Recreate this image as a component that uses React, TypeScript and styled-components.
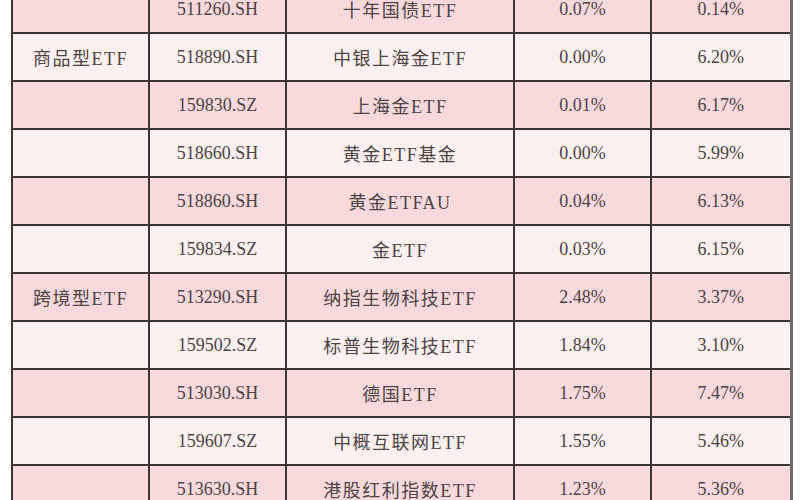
import styled, { createGlobalStyle } from 'styled-components';

const GlobalStyle = createGlobalStyle`
  html, body {
    margin: 0;
    padding: 0;
    background: #ffffff;
    overflow: hidden;
  }
`;

const Page = styled.div`
  width: 800px;
  height: 500px;
  overflow: hidden;
  padding-left: 11px;
  box-sizing: border-box;
`;

const Table = styled.table`
  margin-top: -16px;
  border-collapse: collapse;
  table-layout: fixed;
  width: 779px;
  font-family: "Liberation Serif", "Noto Sans CJK SC", serif;
  font-size: 18px;
  color: #4a4444;
`;

const Col = styled.col<{ $w: number }>`
  width: ${(p) => p.$w}px;
`;

const Row = styled.tr<{ $shade: boolean }>`
  background: ${(p) => (p.$shade ? '#f9d9dc' : '#fdf0f0')};
`;

const Cell = styled.td<{ $cjk?: boolean }>`
  height: 46px;
  padding: 0;
  text-align: center;
  vertical-align: middle;
  border: 2px solid #3a3636;
  white-space: nowrap;
  letter-spacing: ${(p) => (p.$cjk ? '1.5px' : '0')};
  &:last-child {
    border-right: 3px solid #6e6a6a;
  }
`;

type Fund = {
  group: string;
  code: string;
  name: string;
  a: string;
  b: string;
};

const widths = [137, 137, 228, 137, 140];

const funds: Fund[] = [
  { group: '', code: '511260.SH', name: '十年国债ETF', a: '0.07%', b: '0.14%' },
  { group: '商品型ETF', code: '518890.SH', name: '中银上海金ETF', a: '0.00%', b: '6.20%' },
  { group: '', code: '159830.SZ', name: '上海金ETF', a: '0.01%', b: '6.17%' },
  { group: '', code: '518660.SH', name: '黄金ETF基金', a: '0.00%', b: '5.99%' },
  { group: '', code: '518860.SH', name: '黄金ETFAU', a: '0.04%', b: '6.13%' },
  { group: '', code: '159834.SZ', name: '金ETF', a: '0.03%', b: '6.15%' },
  { group: '跨境型ETF', code: '513290.SH', name: '纳指生物科技ETF', a: '2.48%', b: '3.37%' },
  { group: '', code: '159502.SZ', name: '标普生物科技ETF', a: '1.84%', b: '3.10%' },
  { group: '', code: '513030.SH', name: '德国ETF', a: '1.75%', b: '7.47%' },
  { group: '', code: '159607.SZ', name: '中概互联网ETF', a: '1.55%', b: '5.46%' },
  { group: '', code: '513630.SH', name: '港股红利指数ETF', a: '1.23%', b: '5.36%' },
];

export default function App() {
  return (
    <Page>
      <GlobalStyle />
      <Table>
        <colgroup>
          {widths.map((w, i) => (
            <Col key={i} $w={w} />
          ))}
        </colgroup>
        <tbody>
          {funds.map((f, i) => (
            <Row key={f.code} $shade={i % 2 === 0}>
              <Cell $cjk>{f.group}</Cell>
              <Cell>{f.code}</Cell>
              <Cell $cjk>{f.name}</Cell>
              <Cell>{f.a}</Cell>
              <Cell>{f.b}</Cell>
            </Row>
          ))}
        </tbody>
      </Table>
    </Page>
  );
}
